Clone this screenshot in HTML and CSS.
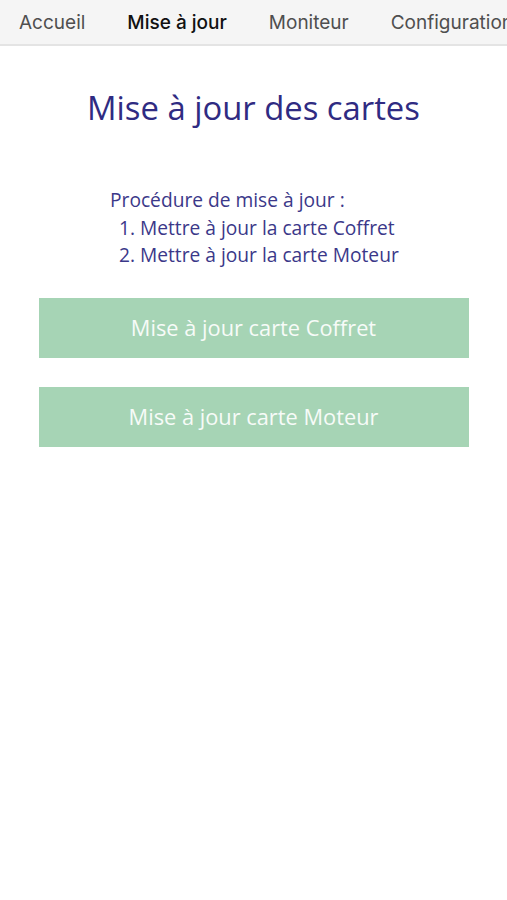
FILE: index.html
```html
<!DOCTYPE html>
<html lang="fr">
<head>
<meta charset="utf-8">
<title>Mise à jour des cartes</title>
<link rel="stylesheet" href="styles.css">
</head>
<body>
<nav class="tabs">
  <a class="tab">Accueil</a>
  <a class="tab active">Mise à jour</a>
  <a class="tab">Moniteur</a>
  <a class="tab">Configuration</a>
</nav>
<main class="page">
  <h1 class="title">Mise à jour des cartes</h1>
  <div class="procedure">
    <p class="proc-head">Procédure de mise à jour :</p>
    <ol class="steps">
      <li>Mettre à jour la carte Coffret</li>
      <li>Mettre à jour la carte Moteur</li>
    </ol>
  </div>
  <div class="actions">
    <button class="btn">Mise à jour carte Coffret</button>
    <button class="btn">Mise à jour carte Moteur</button>
  </div>
</main>
</body>
</html>
```
FILE: styles.css
```css
html, body {
  margin: 0;
  padding: 0;
  background: #ffffff;
  overflow: hidden;
}
body {
  width: 507px;
  font-family: "Open Sans", "Noto Sans", sans-serif;
}
.tabs {
  display: flex;
  height: 44px;
  align-items: center;
  background: #f5f5f5;
  border-bottom: 2px solid #e4e4e4;
  padding-left: 19px;
  white-space: nowrap;
  overflow: hidden;
  font-family: Inter, "Liberation Sans", sans-serif;
  font-size: 19px;
}
.tab {
  color: #4f4f4f;
  margin-right: 42px;
  flex-shrink: 0;
}
.tab.active {
  color: #111111;
  font-weight: 500;
}
.page {
  display: flex;
  flex-direction: column;
  align-items: center;
}
.title {
  margin: 40px 0 0;
  font-weight: 400;
  font-size: 32.8px;
  line-height: 44px;
  color: #2f2b82;
}
.procedure {
  align-self: flex-start;
  margin: 56px 0 0 110px;
  color: #3b3889;
  font-size: 19.2px;
  line-height: 27.5px;
}
.proc-head {
  margin: 0;
}
.steps {
  margin: 0;
  padding-left: 30px;
}
.actions {
  margin-top: 29px;
  display: flex;
  flex-direction: column;
  gap: 29px;
}
.btn {
  width: 430px;
  height: 60px;
  border: none;
  background: #a6d4b5;
  color: #f7fbf8;
  font-family: "Open Sans", "Noto Sans", sans-serif;
  font-size: 21.8px;
  padding: 0;
}
```
